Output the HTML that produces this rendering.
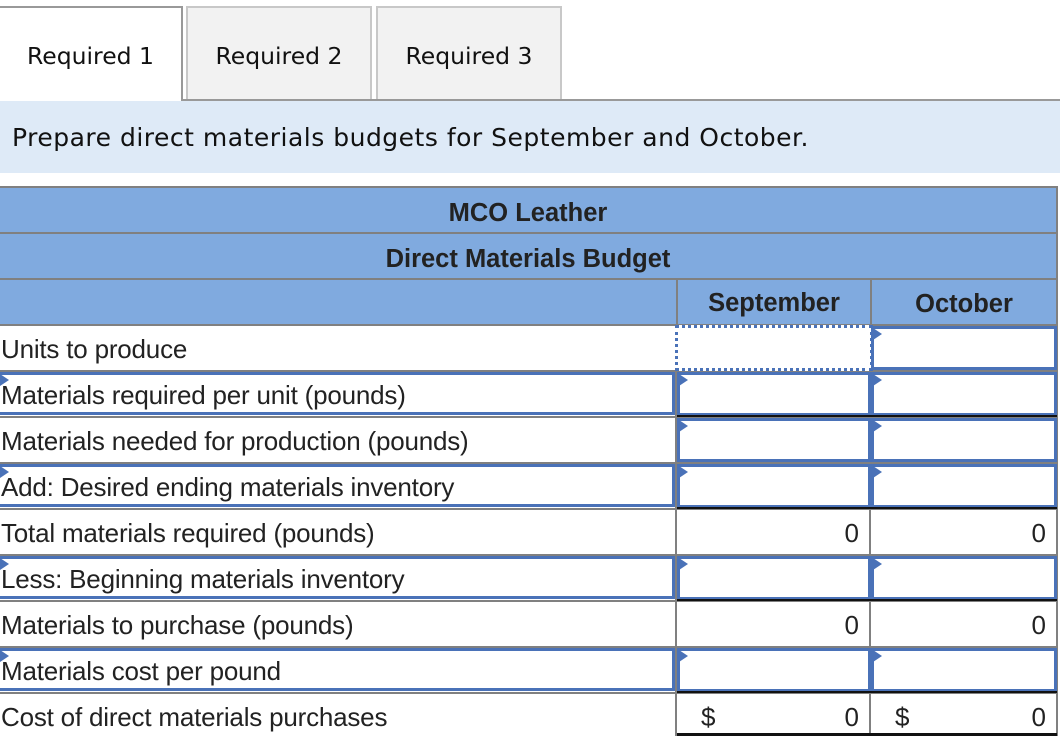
<!DOCTYPE html>
<html><head><meta charset="utf-8"><style>
body{margin:0;width:1060px;height:736px;overflow:hidden;background:#fff;position:relative;font-family:"Liberation Sans",Arial,sans-serif;color:#222}
.a{position:absolute;box-sizing:border-box}
.tab{top:6px;height:95px;border:2px solid #c8c8c8;border-bottom:none;background:#f2f2f2;font-family:"DejaVu Sans",Verdana,sans-serif;font-size:23.5px;color:#111;text-align:center;line-height:96px}
.hd{background:#80aadf;border-top:2px solid #808080;font-weight:bold;font-size:25.5px;text-align:center;color:#222}
.lbl{font-size:26px;line-height:46px;padding-left:1px;white-space:nowrap;letter-spacing:-0.2px}
.box{border:3px solid #4a72b8}
.tri{width:0;height:0;border-top:6px solid transparent;border-bottom:6px solid transparent;border-left:9px solid #4a72b8}
.num{font-size:26px;line-height:46px;text-align:right;padding-right:10px}
.hl{height:2px;background:#808080}
.vl{width:2px;background:#808080}
</style></head><body>
<div class="a tab" style="left:0;width:183px;background:#fff;border-color:#999;border-left:none;border-top:2px solid #999">Required 1</div>
<div class="a tab" style="left:186px;width:186px">Required 2</div>
<div class="a tab" style="left:376px;width:186px">Required 3</div>
<div class="a" style="left:182px;top:99px;width:878px;height:2px;background:#999"></div>
<div class="a" style="left:0;top:101px;width:1060px;height:72px;background:#deeaf7;font-family:'DejaVu Sans',Verdana,sans-serif;font-size:25px;letter-spacing:0.5px;line-height:74px;padding-left:12px;color:#111;white-space:nowrap">Prepare direct materials budgets for September and October.</div>

<div class="a hd" style="left:0;top:186px;width:1058px;height:47px;line-height:50px;border-right:2px solid #808080">MCO Leather</div>
<div class="a hd" style="left:0;top:232px;width:1058px;height:47px;line-height:50px;border-right:2px solid #808080">Direct Materials Budget</div>
<div class="a hd" style="left:0;top:278px;width:1058px;height:47px;border-right:2px solid #808080"></div>
<div class="a hd" style="left:676px;top:278px;width:196px;height:47px;line-height:46px;border-left:2px solid #808080;border-right:2px solid #808080;background:none">September</div>
<div class="a hd" style="left:872px;top:278px;width:184px;height:47px;line-height:48px;background:none">October</div>

<div class="a hl" style="left:0;top:324px;width:1058px"></div>
<div class="a hl" style="left:0;top:370px;width:1058px"></div>
<div class="a hl" style="left:0;top:416px;width:1058px"></div>
<div class="a hl" style="left:0;top:462px;width:1058px"></div>
<div class="a hl" style="left:0;top:508px;width:1058px"></div>
<div class="a hl" style="left:0;top:554px;width:1058px"></div>
<div class="a hl" style="left:0;top:600px;width:1058px"></div>
<div class="a hl" style="left:0;top:646px;width:1058px"></div>
<div class="a hl" style="left:0;top:692px;width:1058px"></div>
<div class="a vl" style="left:675px;top:324px;height:412px"></div>
<div class="a vl" style="left:869px;top:324px;height:412px"></div>
<div class="a vl" style="left:1056px;top:324px;height:412px"></div>

<div class="a box" style="left:-3px;top:372px;width:678px;height:43px"></div>
<div class="a box" style="left:-3px;top:464px;width:678px;height:43px"></div>
<div class="a box" style="left:-3px;top:556px;width:678px;height:43px"></div>
<div class="a box" style="left:-3px;top:648px;width:678px;height:43px"></div>

<div class="a lbl" style="left:0;top:326px">Units to produce</div>
<div class="a lbl" style="left:0;top:372px">Materials required per unit (pounds)</div>
<div class="a lbl" style="left:0;top:418px">Materials needed for production (pounds)</div>
<div class="a lbl" style="left:0;top:464px">Add: Desired ending materials inventory</div>
<div class="a lbl" style="left:0;top:510px">Total materials required (pounds)</div>
<div class="a lbl" style="left:0;top:556px">Less: Beginning materials inventory</div>
<div class="a lbl" style="left:0;top:602px">Materials to purchase (pounds)</div>
<div class="a lbl" style="left:0;top:648px">Materials cost per pound</div>
<div class="a lbl" style="left:0;top:694px">Cost of direct materials purchases</div>

<div class="a tri" style="left:0;top:374px"></div>
<div class="a tri" style="left:0;top:466px"></div>
<div class="a tri" style="left:0;top:558px"></div>
<div class="a tri" style="left:0;top:650px"></div>

<div class="a" style="left:675px;top:325px;width:198px;height:46px;border:3px dotted #4a72b8;background:#fff"></div>
<div class="a box" style="left:871px;top:326px;width:186px;height:44px"></div><div class="a tri" style="left:873px;top:328px"></div>

<div class="a box" style="left:677px;top:372px;width:194px;height:44px"></div><div class="a tri" style="left:679px;top:374px"></div>
<div class="a box" style="left:871px;top:372px;width:186px;height:44px"></div><div class="a tri" style="left:873px;top:374px"></div>
<div class="a" style="left:677px;top:415px;width:380px;height:2px;background:#111"></div>
<div class="a box" style="left:677px;top:418px;width:194px;height:44px"></div><div class="a tri" style="left:679px;top:420px"></div>
<div class="a box" style="left:871px;top:418px;width:186px;height:44px"></div><div class="a tri" style="left:873px;top:420px"></div>
<div class="a box" style="left:677px;top:464px;width:194px;height:44px"></div><div class="a tri" style="left:679px;top:466px"></div>
<div class="a box" style="left:871px;top:464px;width:186px;height:44px"></div><div class="a tri" style="left:873px;top:466px"></div>
<div class="a" style="left:677px;top:507px;width:380px;height:2px;background:#111"></div>
<div class="a box" style="left:677px;top:556px;width:194px;height:44px"></div><div class="a tri" style="left:679px;top:558px"></div>
<div class="a box" style="left:871px;top:556px;width:186px;height:44px"></div><div class="a tri" style="left:873px;top:558px"></div>
<div class="a" style="left:677px;top:599px;width:380px;height:2px;background:#111"></div>
<div class="a box" style="left:677px;top:648px;width:194px;height:44px"></div><div class="a tri" style="left:679px;top:650px"></div>
<div class="a box" style="left:871px;top:648px;width:186px;height:44px"></div><div class="a tri" style="left:873px;top:650px"></div>
<div class="a" style="left:677px;top:691px;width:380px;height:2px;background:#111"></div>
<div class="a" style="left:677px;top:733px;width:380px;height:3px;background:#111"></div>

<div class="a num" style="left:677px;top:510px;width:192px">0</div>
<div class="a num" style="left:871px;top:510px;width:185px">0</div>
<div class="a num" style="left:677px;top:602px;width:192px">0</div>
<div class="a num" style="left:871px;top:602px;width:185px">0</div>
<div class="a num" style="left:677px;top:694px;width:192px">0</div>
<div class="a num" style="left:871px;top:694px;width:185px">0</div>
<div class="a lbl" style="left:700px;top:694px">$</div>
<div class="a lbl" style="left:894px;top:694px">$</div>
</body></html>
